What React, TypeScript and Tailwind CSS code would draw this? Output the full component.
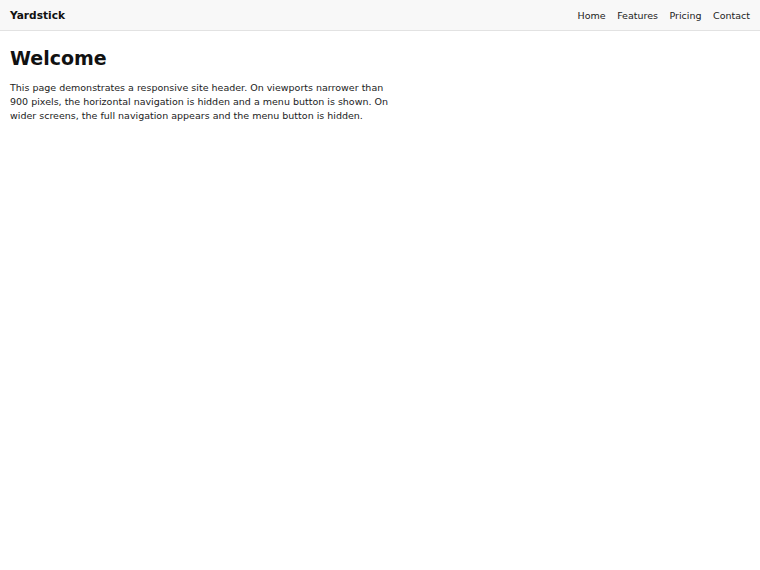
import React from 'react';

const links = ['Home', 'Features', 'Pricing', 'Contact'];

export default function App() {
  return (
    <div className="min-h-screen bg-white text-[#111] font-['DejaVu_Sans',sans-serif]">
      {/* Site header */}
      <header className="h-[31px] px-[10px] pt-[1px] flex items-center justify-between bg-[#f8f8f8] border-b border-[#e2e2e2]">
        <span className="text-[10.6px] font-bold">Yardstick</span>
        <nav className="flex items-center gap-[11.5px] text-[9.5px] text-[#222]">
          {links.map((l) => (
            <a key={l} href="#" className="leading-none">
              {l}
            </a>
          ))}
        </nav>
      </header>

      <main className="px-[10px] pt-[14px]">
        <h1 className="text-[19px] font-bold leading-[26px]">Welcome</h1>
        <p className="mt-[10px] max-w-[390px] text-[9.5px] leading-[14px] text-[#1c1c1c]">
          This page demonstrates a responsive site header. On viewports narrower than 900 pixels,
          the horizontal navigation is hidden and a menu button is shown. On wider screens, the full
          navigation appears and the menu button is hidden.
        </p>
      </main>
    </div>
  );
}
